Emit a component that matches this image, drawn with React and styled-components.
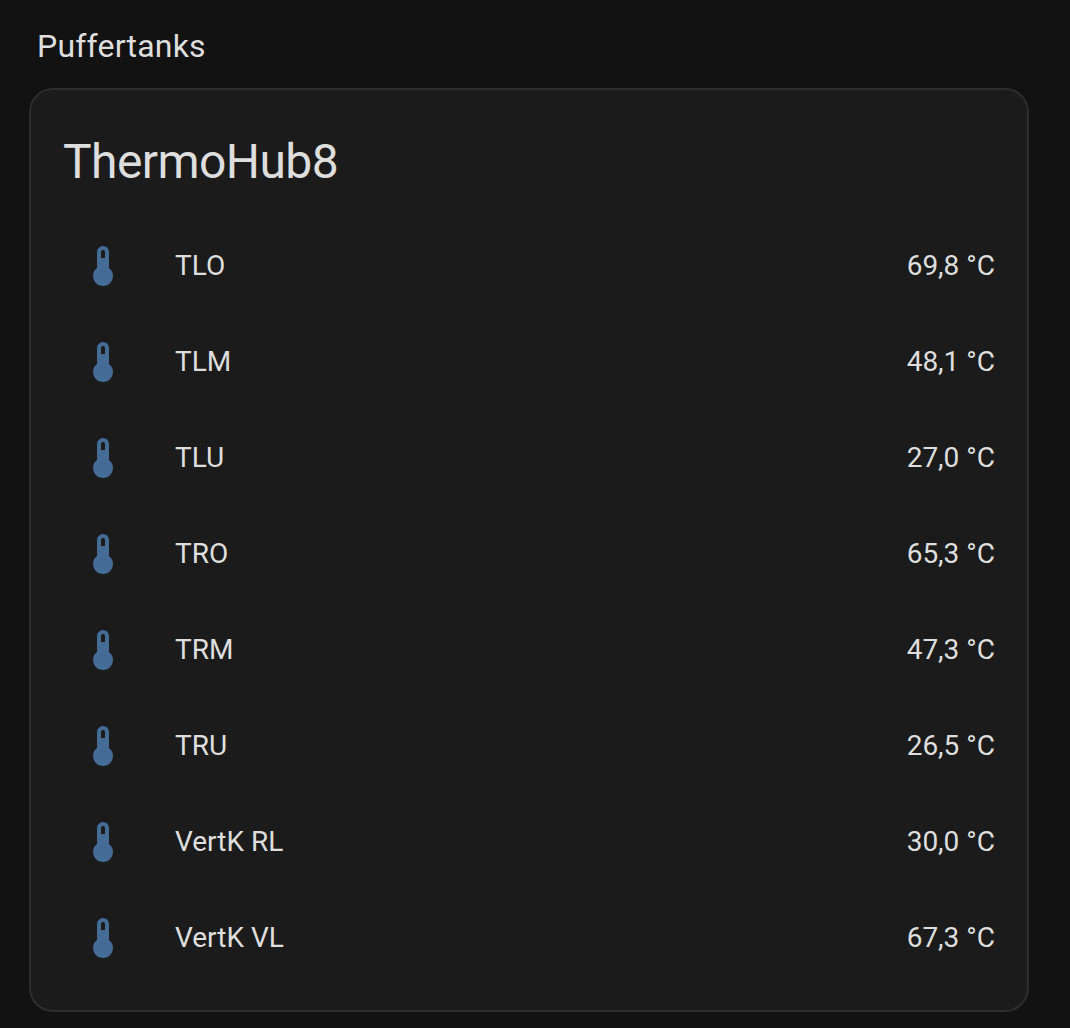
import React from "react";
import styled, { createGlobalStyle } from "styled-components";

const Global = createGlobalStyle`
  html, body { margin: 0; background: #121212; }
  body { font-family: Roboto, "Noto Sans", sans-serif; color: #dedede; -webkit-font-smoothing: antialiased; }
  * { box-sizing: border-box; }
`;
const Page = styled.main`
  height: 1028px;
  padding: 26px 41px 0 29px;
  overflow: hidden;
`;
const SectionTitle = styled.h2`
  margin: 0 0 22px;
  padding-left: 8px;
  font-size: 32px;
  line-height: 40px;
  font-weight: 400;
  letter-spacing: 0.2px;
`;
const Card = styled.section`
  height: 924px;
  border: 2px solid #2d2d2d;
  border-radius: 24px;
  background: #1b1b1b;
`;
const CardTitle = styled.h1`
  margin: 0;
  padding: 24px 32px 32px;
  font-size: 48px;
  line-height: 96px;
  font-weight: 400;
  letter-spacing: -0.576px;
`;
const List = styled.div`
  display: flex;
  flex-direction: column;
  gap: 16px;
  padding: 0 32px;
  margin-top: -16px;
`;
const Row = styled.div`
  display: flex;
  align-items: center;
  height: 80px;
  font-size: 28px;
  line-height: 40px;
`;
const IconCell = styled.div`
  flex: 0 0 80px;
  display: flex;
  justify-content: center;
  color: #446c96;
`;
const Name = styled.span`
  flex: 1;
  padding-left: 32px;
`;
const Value = styled.span`
  white-space: nowrap;
`;

const Thermometer = () => (
  <svg width="48" height="48" viewBox="0 0 24 24" fill="currentColor" aria-hidden="true">
    <path d="M15 13V5A3 3 0 0 0 9 5V13A5 5 0 1 0 15 13M12 4A1 1 0 0 1 13 5V8H11V5A1 1 0 0 1 12 4Z" />
  </svg>
);

const sensors = [
  ["TLO", "69,8 °C"],
  ["TLM", "48,1 °C"],
  ["TLU", "27,0 °C"],
  ["TRO", "65,3 °C"],
  ["TRM", "47,3 °C"],
  ["TRU", "26,5 °C"],
  ["VertK RL", "30,0 °C"],
  ["VertK VL", "67,3 °C"],
];

export default function App() {
  return (
    <Page>
      <Global />
      <SectionTitle>Puffertanks</SectionTitle>
      <Card>
        <CardTitle>ThermoHub8</CardTitle>
        <List>
          {sensors.map(([name, value]) => (
            <Row key={name}>
              <IconCell><Thermometer /></IconCell>
              <Name>{name}</Name>
              <Value>{value}</Value>
            </Row>
          ))}
        </List>
      </Card>
    </Page>
  );
}
